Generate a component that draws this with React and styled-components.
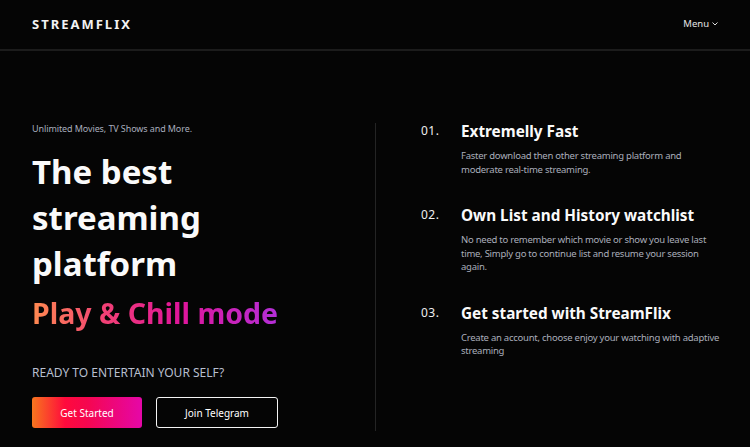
import React from "react";
import styled, { createGlobalStyle } from "styled-components";

const GlobalStyle = createGlobalStyle`
  html, body {
    margin: 0;
    background: #050505;
  }
  body {
    font-family: "Noto Sans", "Open Sans", sans-serif;
    color: #fff;
  }
`;

const Page = styled.div`
  min-height: 447px;
  background: #050505;
`;

const Header = styled.header`
  height: 49px;
  padding: 0 32px;
  display: flex;
  align-items: center;
  justify-content: space-between;
  border-bottom: 2px solid #1c1c1c;
`;

const Logo = styled.div`
  font-size: 13px;
  font-weight: 700;
  letter-spacing: 2px;
  color: #f2f2f2;
  margin-top: -2px;
`;

const Menu = styled.div`
  font-size: 9.5px;
  color: #e6e6e6;
  display: flex;
  align-items: center;
  gap: 3px;
  margin-top: -2px;
`;

const Main = styled.main`
  display: grid;
  grid-template-columns: 343px 1px 1fr;
  padding: 72px 0 0 32px;
`;

const Left = styled.section`
  display: flex;
  flex-direction: column;
`;

const Kicker = styled.p`
  margin: 0;
  font-size: 9px;
  line-height: 12px;
  letter-spacing: -0.1px;
  color: #a8adbd;
`;

const Title = styled.h1`
  margin: 14px 0 0;
  font-size: 33px;
  line-height: 46px;
  font-weight: 700;
  color: #fafafa;
`;

const Gradient = styled.div`
  margin-top: 8px;
  font-size: 28.5px;
  line-height: 36px;
  font-weight: 700;
  background: linear-gradient(90deg, #ff8a50 0%, #f23f76 30%, #e0159a 60%, #b42fd8 100%);
  -webkit-background-clip: text;
  background-clip: text;
  color: transparent;
  width: max-content;
`;

const Ready = styled.p`
  margin: 35px 0 0;
  font-size: 12px;
  line-height: 14px;
  color: #b8bfcf;
`;

const Buttons = styled.div`
  display: flex;
  gap: 14px;
  margin-top: 17px;
`;

const Button = styled.button`
  height: 31px;
  width: ${(p) => p.$w}px;
  border-radius: 3px;
  font-family: inherit;
  font-size: 10px;
  color: #fff;
  cursor: pointer;
  border: ${(p) => (p.$outline ? "1.5px solid #f4f4f4" : "none")};
  background: ${(p) =>
    p.$outline
      ? "transparent"
      : "linear-gradient(90deg, #f7761e 0%, #ff0a3c 30%, #f5064f 50%, #e507a8 100%)"};
`;

const Divider = styled.div`
  background: #242424;
  height: 308px;
`;

const Right = styled.section`
  padding-left: 45px;
  display: flex;
  flex-direction: column;
  gap: 27px;
  margin-top: -4px;
`;

const Item = styled.div`
  display: grid;
  grid-template-columns: 40px 280px;
`;

const Num = styled.div`
  font-size: 12px;
  line-height: 24px;
  color: #eee;
  letter-spacing: 0.5px;
`;

const ItemTitle = styled.h3`
  margin: 0;
  font-size: 15.3px;
  line-height: 24px;
  font-weight: 700;
  color: #fafafa;
`;

const ItemText = styled.p`
  margin: 6px 0 0;
  font-size: 9.5px;
  line-height: 13.5px;
  letter-spacing: -0.25px;
  color: #aaaebb;
`;

const features = [
  {
    n: "01.",
    title: "Extremelly Fast",
    lines: ["Faster download then other streaming platform and", "moderate real-time streaming."],
  },
  {
    n: "02.",
    title: "Own List and History watchlist",
    lines: [
      "No need to remember which movie or show you leave last",
      "time, Simply go to continue list and resume your session",
      "again.",
    ],
  },
  {
    n: "03.",
    title: "Get started with StreamFlix",
    lines: ["Create an account, choose enjoy your watching with adaptive", "streaming"],
  },
];

export default function App() {
  return (
    <Page>
      <GlobalStyle />
      <Header>
        <Logo>STREAMFLIX</Logo>
        <Menu>
          Menu
          <svg width="6" height="4" viewBox="0 0 6 4">
            <path d="M0.5 0.5 L3 3 L5.5 0.5" fill="none" stroke="#ddd" strokeWidth="1" />
          </svg>
        </Menu>
      </Header>
      <Main>
        <Left>
          <Kicker>Unlimited Movies, TV Shows and More.</Kicker>
          <Title>
            The best
            <br />
            streaming
            <br />
            platform
          </Title>
          <Gradient>Play &amp; Chill mode</Gradient>
          <Ready>READY TO ENTERTAIN YOUR SELF?</Ready>
          <Buttons>
            <Button $w={110}>Get Started</Button>
            <Button $w={122} $outline>
              Join Telegram
            </Button>
          </Buttons>
        </Left>
        <Divider />
        <Right>
          {features.map((f) => (
            <Item key={f.n}>
              <Num>{f.n}</Num>
              <div>
                <ItemTitle>{f.title}</ItemTitle>
                <ItemText>
                  {f.lines.map((l, i) => (
                    <React.Fragment key={i}>
                      {i > 0 && <br />}
                      {l}
                    </React.Fragment>
                  ))}
                </ItemText>
              </div>
            </Item>
          ))}
        </Right>
      </Main>
    </Page>
  );
}
